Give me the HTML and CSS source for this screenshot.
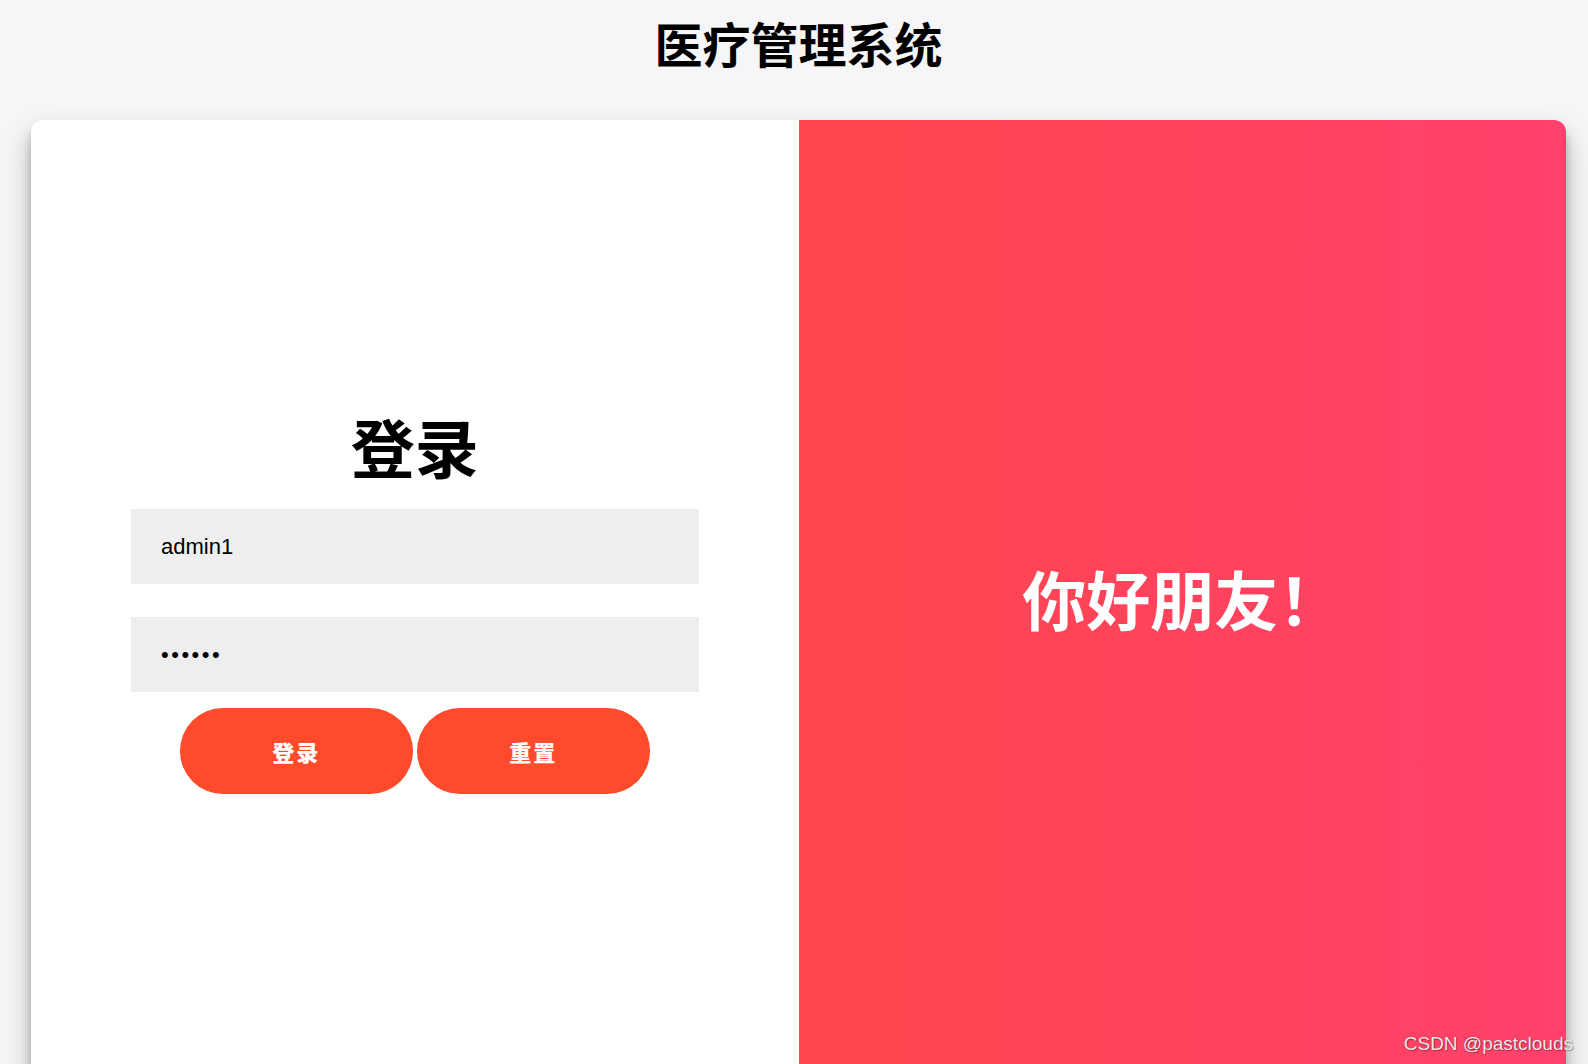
FILE: index.html
```html
<!DOCTYPE html>
<html lang="zh-CN">
<head>
<meta charset="utf-8">
<title>医疗管理系统</title>
<link rel="stylesheet" href="styles.css">
</head>
<body>
<div class="page">
  <h2 class="app-title">医疗管理系统</h2>
  <div class="card">
    <div class="form-panel">
      <h1 class="form-title">登录</h1>
      <input class="field field-user" type="text" value="admin1">
      <input class="field field-pass" type="password" value="123456">
      <div class="actions">
        <button class="btn" type="button">登录</button>
        <button class="btn" type="button">重置</button>
      </div>
    </div>
    <div class="overlay-panel">
      <p class="greeting">你好朋友！</p>
    </div>
  </div>
</div>
<div class="watermark">CSDN @pastclouds</div>
</body>
</html>
```
FILE: styles.css
```css
html, body {
  margin: 0;
  padding: 0;
  overflow: hidden;
  height: 100%;
}
body {
  background: #f6f5f7;
  font-family: "Noto Sans CJK SC", "Noto Sans", sans-serif;
  color: #000;
}
.page {
  margin-left: 31px;
  width: 1535px;
}
.app-title {
  margin: 18px 0 54px;
  font-size: 48px;
  line-height: 48px;
  font-weight: 700;
  text-align: center;
}
.card {
  width: 1535px;
  height: 967px;
  background: #fff;
  border-radius: 12px;
  box-shadow: 0 14px 28px rgba(0,0,0,0.25), 0 10px 10px rgba(0,0,0,0.22);
  overflow: hidden;
  display: grid;
  grid-template-columns: 1fr 1fr;
}
.form-panel {
  display: flex;
  flex-direction: column;
  align-items: center;
  justify-content: center;
  padding: 0 100px;
}
.form-title {
  margin: 0 0 32px;
  font-size: 64px;
  line-height: 64px;
  font-weight: 700;
}
.field {
  box-sizing: border-box;
  width: 100%;
  height: 75px;
  border: none;
  outline: none;
  background: #eee;
  padding: 0 30px;
  font-family: "Liberation Sans", Arial, sans-serif;
  font-size: 22px;
  color: #000;
}
.field-user {
  margin: 0 0 33px;
}
.field-pass {
  margin: 0 0 16px;
  letter-spacing: 2.5px;
}
.actions {
  display: flex;
  gap: 4px;
}
.btn {
  width: 233px;
  height: 86px;
  border: none;
  border-radius: 43px;
  background: #ff4b2b;
  color: #fff;
  font-family: "Noto Sans CJK SC", sans-serif;
  font-size: 22px;
  font-weight: 900;
  letter-spacing: 2px;
  padding: 0;
}
.overlay-panel {
  background: linear-gradient(to right, #ff464c, #ff416c);
  display: flex;
  align-items: center;
  justify-content: center;
}
.greeting {
  margin: 0 0 14px;
  color: #fff;
  font-size: 64px;
  line-height: 64px;
  font-weight: 700;
}
.watermark {
  position: absolute;
  right: 15px;
  bottom: 11px;
  font-family: "Liberation Sans", Arial, sans-serif;
  font-size: 19px;
  line-height: 19px;
  color: rgba(255,255,255,0.92);
  text-shadow: 0 0 1px rgba(0,0,0,0.45), 1px 1px 1px rgba(0,0,0,0.3);
}
```
